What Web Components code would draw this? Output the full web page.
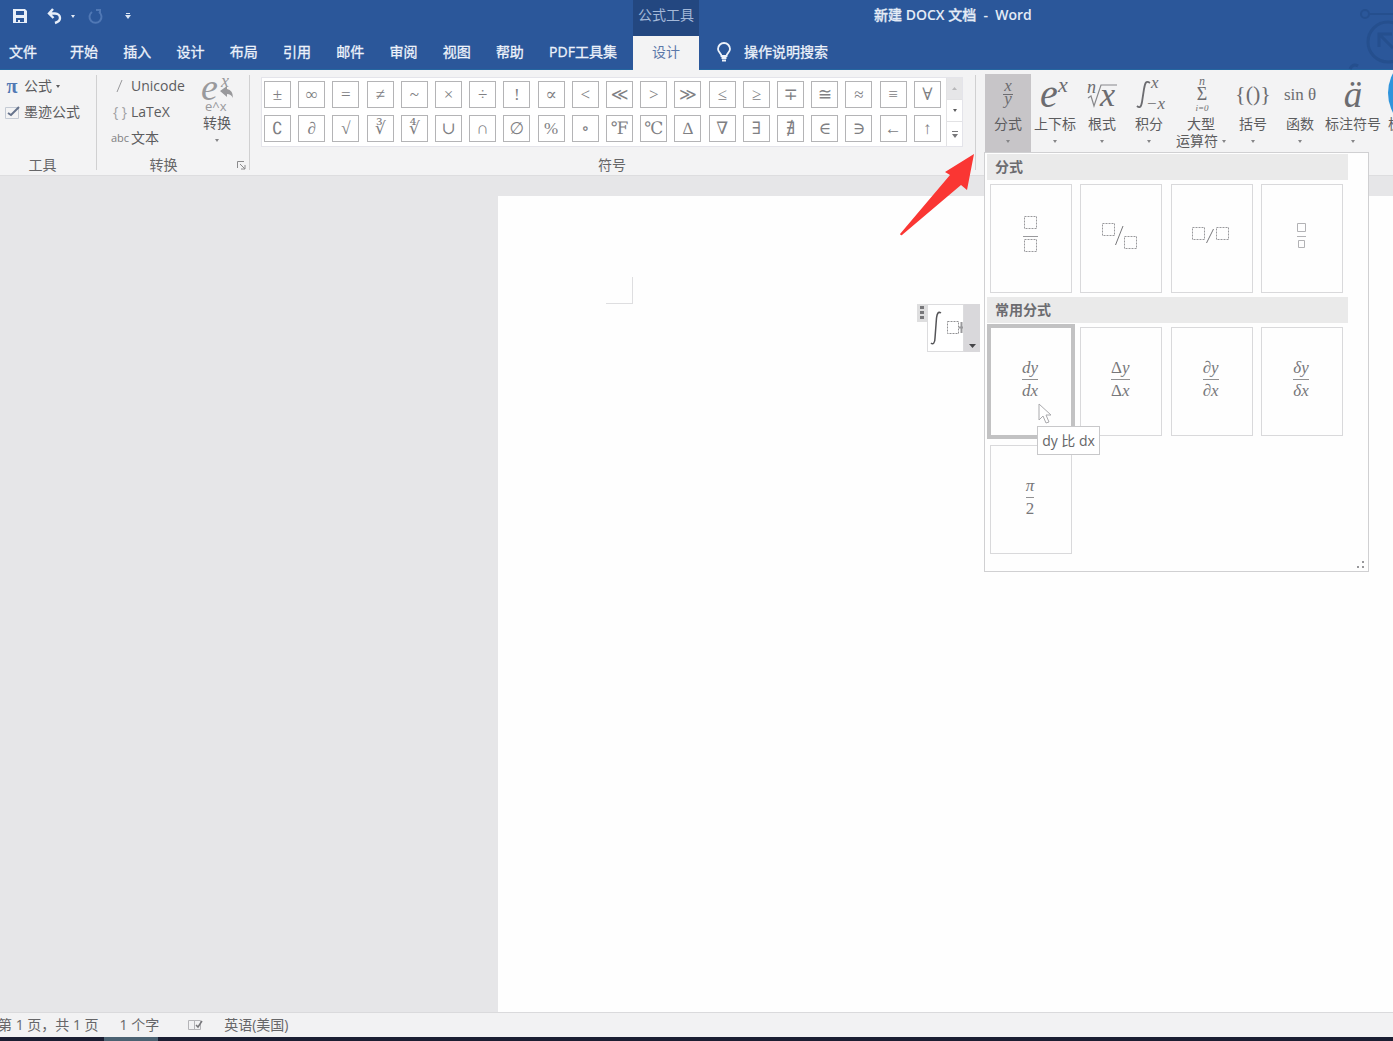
<!DOCTYPE html>
<html lang="zh-CN">
<head>
<meta charset="utf-8">
<title>新建 DOCX 文档 - Word</title>
<style>
html, body { margin: 0; height: 100%; overflow: hidden; }
body { font: 14px/20px "Open Sans", "Noto Sans CJK SC", sans-serif; color: #5c5c5e; }
</style>
</head>
<body>
<word-app></word-app>
<script>
const base = `*{box-sizing:border-box}
button{font:inherit;color:inherit;background:none;border:0;padding:0;margin:0;cursor:default}
a{color:inherit;text-decoration:none}svg{display:block;flex:none;overflow:visible}
svg text{font-family:"Liberation Serif","DejaVu Serif",serif}`;
function define(name, css, html) {
  customElements.define(name, class extends HTMLElement {
    constructor() {
      super();
      const root = this.attachShadow({ mode: "open" });
      root.innerHTML = `<style>${base}${css}</style>` + (typeof html === "function" ? html(this) : html);
    }
  });
}

define("caret-down", `:host{display:inline-block;width:4px;height:3px}`,
  `<svg width="4" height="3" viewBox="0 0 4 3"><path d="M0 0h4L2 3z" fill="currentColor"/></svg>`);

define("title-bar", `
:host{display:flex;height:36px;background:#2b579a;color:#e4ebf6;position:relative}
.quick{width:633px;display:flex;align-items:center;padding:0 13px 4px}
.quick button{display:flex;align-items:center}
.undo{margin-left:20px}.more{margin-left:9px}.redo{margin-left:13px}.custom{margin-left:22px}
.context{width:66px;background:#234780;color:#a3b8d8;text-align:center;line-height:30px}
h1{font:500 14px/30px "Open Sans","Noto Sans CJK SC",sans-serif;margin:0 0 0 175px;white-space:pre;-webkit-text-stroke:.3px}
.latin{font-weight:600;-webkit-text-stroke:0}
.art{position:absolute;right:0;top:0}`,
`<div class="quick">
<button aria-label="保存"><svg width="14" height="14" viewBox="0 0 14 14"><path fill="#e8eff9" fill-rule="evenodd" d="M0 0h12l2 2v12H0zM3 2v4h8V2zM3 9v4h2v-2h2v2h4V9z"/></svg></button>
<button class="undo" aria-label="撤消"><svg width="15" height="15" viewBox="0 0 15 15" fill="none" stroke="#e8eff9" stroke-width="2.400"><path d="M6 0L2 4.500l4.500 4.500M2 4.500h6c3 0 5 2 5 4.500s-2 4-5 5"/></svg></button>
<button class="more" aria-label="撤消列表"><caret-down></caret-down></button>
<button class="redo" aria-label="恢复"><svg width="15" height="15" viewBox="0 0 15 15" fill="none" stroke="#5078b5" stroke-width="2"><path d="M4 3a6 6 0 1 0 7 0M8 1h4v4"/></svg></button>
<button class="custom" aria-label="自定义快速访问工具栏"><svg width="6" height="6" viewBox="0 0 6 6" fill="#dce6f4"><path d="M1 0h4v1H1zM0 2h6L3 6z"/></svg></button>
</div>
<div class="context">公式工具</div>
<h1>新建 <span class="latin">DOCX</span> 文档  <span class="latin">-  Word</span></h1>
<svg class="art" width="43" height="70" viewBox="0 0 43 70" fill="none" stroke="#254f8e" stroke-width="3"><circle cx="15" cy="14" r="4" stroke-width="2"/><path d="M19 14h24" stroke-width="2"/><circle cx="38" cy="42" r="20"/><path d="M29 47V34h13M29 34l14 14M0 69q3-6 8-3"/></svg>`);

define("ribbon-tab", `
:host{display:block}
a{display:block;line-height:32px;white-space:nowrap;-webkit-text-stroke:.3px}
:host([selected]) a{width:66px;height:34px;text-align:center;background:#f3f3f4;color:#5b78a9;-webkit-text-stroke:0}`,
`<a href="#"><slot></slot></a>`);

define("ribbon-tabs", `
:host{display:flex;height:34px;background:linear-gradient(#2b579a 33px,#2566a0 33px);color:#edf2fa;position:relative}
nav{display:flex;padding-left:9px;width:633px}
.rest{display:flex;flex:1;justify-content:space-between;margin:0 16px 0 33px}
.tell{display:flex;gap:13px;margin-left:18px;align-items:center;height:32px;-webkit-text-stroke:.3px}`,
`<nav><ribbon-tab>文件</ribbon-tab><div class="rest">
${["开始","插入","设计","布局","引用","邮件","审阅","视图","帮助","PDF工具集"].map(t => `<ribbon-tab>${t}</ribbon-tab>`).join("")}
</div></nav><ribbon-tab selected>设计</ribbon-tab>
<button class="tell"><svg width="14" height="19" viewBox="0 0 14 19" fill="none" stroke="#edf2fa" stroke-width="1.800"><path d="M4.500 13C4.500 10 1 9.500 1 6a6 6 0 0 1 12 0c0 3.500-3.500 4-3.500 7z"/><path d="M4.500 15h5M5 17.500h4" stroke-width="2"/></svg><span>操作说明搜索</span></button>`);

define("ribbon-group", `
:host{display:flex;flex-direction:column;height:105px;flex:none;position:relative;border:0}
:host::after{content:"";position:absolute;right:0;top:5px;bottom:5px;width:1px;background:#d0d0d1}
.body{flex:1;display:flex;padding-top:3px}
footer{height:20px;line-height:20px;text-align:center;padding-right:var(--label-inset,0px);color:#666668}
.launch{position:absolute;right:4px;bottom:5px}`,
el => `<div class="body"><slot></slot></div><footer>${el.getAttribute("label")}</footer>` +
(el.hasAttribute("launcher") ? `<button class="launch" aria-label="转换选项"><svg width="9" height="9" viewBox="0 0 9 9" fill="none" stroke="#8a8a8c"><path d="M.5 7V.5H7M3 3l5 5M8 4v4H4"/></svg></button>` : ""));

define("small-command", `
:host{display:block}
button{display:flex;align-items:center;height:26px;white-space:nowrap}
.icon{display:flex;justify-content:center;flex:none;width:var(--icon,24px);color:#a0a0a2}
caret-down{margin-left:4px}`,
el => `<button><span class="icon"><slot name="icon"></slot></span><slot></slot>${el.hasAttribute("menu") ? "<caret-down></caret-down>" : ""}</button>`);

define("large-command", `
:host{display:block;flex:none}
button{display:flex;flex-direction:column;align-items:center;width:100%;height:78px;white-space:nowrap}
:host([open]) button{background:#c7c5c8}
.icon{height:41px;display:flex;align-items:center;justify-content:center}
.label{line-height:18px;text-align:center}
caret-down{margin-top:7px;color:#858587}
.two{display:flex;align-items:center;gap:4px;line-height:16px}.two caret-down{margin:0}`,
el => `<button><span class="icon"><slot></slot></span><span class="label">${el.getAttribute("label")}</span>` +
(el.getAttribute("second") ? `<span class="two">${el.getAttribute("second")}<caret-down></caret-down></span>` : `<caret-down></caret-down>`) + `</button>`);

define("symbol-gallery", `
:host{display:flex;width:702px;height:70px;margin:4px 0 0 11px;background:#fff;border:1px solid #e4e4ea}
.grid{flex:1;display:grid;grid-template-columns:repeat(20,27px);grid-auto-rows:27px;row-gap:7px;justify-content:space-between;padding:3px 5px 0 2px}
.grid button{border:1px solid #b4b4b6;font:17px/25px "Liberation Serif","DejaVu Serif","DejaVu Sans",serif;color:#808083;overflow:hidden;text-align:center}
.scroll{width:16px;display:grid;grid-template-rows:22px 22px 1fr;border-left:1px solid #e2e2e4}
.scroll button{display:flex;align-items:center;justify-content:center;border-bottom:1px solid #e2e2e4}
.scroll button:first-child{background:#e6e6e8;color:#b8b8ba}.scroll button:last-child{border:0}`,
`<div class="grid">${[..."±∞=≠~×÷!∝<≪>≫≤≥∓≅≈≡∀∁∂√∛∜∪∩∅%∘℉℃∆∇∃∄∈∋←↑"].map(s => `<button>${s.replace("<","&lt;")}</button>`).join("")}</div>
<div class="scroll"><button aria-label="上一行"><svg width="5" height="3"><path d="M0 3h5L2.500 0z" fill="currentColor"/></svg></button><button aria-label="下一行"><caret-down></caret-down></button><button aria-label="其他"><svg width="6" height="7" fill="#77777a"><path d="M0 0h6v1H0zM0 3h6L3 7z"/></svg></button></div>`);

define("math-fraction", `
:host{display:inline-flex;flex-direction:column;align-items:center;font:italic 17px/18px "Liberation Serif","DejaVu Serif",serif;color:#77777a}
:host([upright]){font-style:normal}
.top{padding:0 0 2px;border-bottom:1px solid #909092}.bottom{padding-top:2px}`,
`<span class="top"><slot name="top"></slot></span><span class="bottom"><slot name="bottom"></slot></span>`);

define("gallery-tile", `
:host{display:block;position:relative}
button{width:82px;height:109px;display:flex;align-items:center;justify-content:center;border:1px solid #d9d9db;background:#fefefe;padding:0 2px 5px 0}
:host([active]) button{outline:4px solid #c2c2c3;outline-offset:-1px}
.tip{position:absolute;left:47px;top:99px;z-index:2}`,
`<button><slot></slot></button><div class="tip"><slot name="tip"></slot></div>`);

define("screen-tip", `
:host{display:block;width:63px;height:29px;background:#fff;border:1px solid #c8c8ca;text-align:center;line-height:27px;white-space:nowrap;color:#666668;position:relative}
svg{position:absolute;left:0;top:-24px}`,
`<slot></slot><svg width="14" height="21" viewBox="0 0 14 21"><path d="M1 1v16l4-4 3 7 3-1-3-7h5z" fill="#fff" stroke="#aaaaad"/></svg>`);

define("fraction-menu", `
:host{display:block;width:385px;height:420px;background:#fefefe;border:1px solid #d0d0d2;padding:1px 20px 0 2px}
h2{margin:0;height:26px;background:#eaeaea;font:bold 14px/26px "Open Sans","Noto Sans CJK SC",sans-serif;color:#6c6c70;padding-left:8px}
.tiles{display:grid;grid-template-columns:repeat(4,82px);justify-content:space-between;row-gap:9px;padding:4px 5px 4px 3px}
.grip{position:absolute;right:4px;bottom:3px}`,
`<h2>分式</h2><div class="tiles">
<gallery-tile><svg width="16" height="40" fill="none" stroke="#99999c"><path d="M2.500.5h12v12h-12zM2.500 23.500h12v12h-12z" stroke-dasharray="2 1"/><path d="M1 20.500h15"/></svg></gallery-tile>
<gallery-tile><svg width="36" height="30" fill="none" stroke="#99999c"><path d="M.5 2.500h12v12H.5zM22.500 15.500h12v12h-12z" stroke-dasharray="2 1"/><path d="M13.500 24L21 5" stroke="#77777a"/></svg></gallery-tile>
<gallery-tile><svg width="38" height="18" fill="none" stroke="#99999c"><path d="M.5.5h12v12H.5zM24.500.5h12v12h-12z" stroke-dasharray="2 1"/><path d="M14.500 16l7-14" stroke="#77777a"/></svg></gallery-tile>
<gallery-tile><svg width="12" height="26" fill="none" stroke="#b2b2b5"><path d="M2.500.5h8v8h-8zM3.500 17.500h6v7h-6zM2 13.500h9"/></svg></gallery-tile>
</div><h2>常用分式</h2><div class="tiles">
<gallery-tile active><math-fraction><span slot="top">dy</span><span slot="bottom">dx</span></math-fraction><screen-tip slot="tip">dy 比 dx</screen-tip></gallery-tile>
<gallery-tile><math-fraction><span slot="top"><span style="font-style:normal">Δ</span>y</span><span slot="bottom"><span style="font-style:normal">Δ</span>x</span></math-fraction></gallery-tile>
<gallery-tile><math-fraction><span slot="top">∂y</span><span slot="bottom">∂x</span></math-fraction></gallery-tile>
<gallery-tile><math-fraction><span slot="top">δy</span><span slot="bottom">δx</span></math-fraction></gallery-tile>
<gallery-tile><math-fraction upright><i slot="top">π</i><span slot="bottom">2</span></math-fraction></gallery-tile>
</div><svg class="grip" width="7" height="7" fill="#98989b"><path d="M5 0h2v2H5zM5 5h2v2H5zM0 5h2v2H0z"/></svg>`);

define("structure-group", `
:host{display:block;flex:1;min-width:0;position:relative;padding:4px 0 0 9px}
.row{display:flex;overflow:hidden}
fraction-menu{position:absolute;left:8px;top:82px;z-index:5}
.w46{width:46px}.w48{width:48px}.w56{width:56px}.w60{width:60px}.w80{width:80px}
svg{fill:#6c6c70}`,
`<div class="row">
<large-command open class="w46" label="分式"><svg width="24" height="34"><g font-style="italic" font-size="17" text-anchor="middle"><text x="12" y="13">x</text><text x="12" y="26">y</text></g><path d="M7 16h10v1H7z"/></svg></large-command>
<large-command class="w48" label="上下标"><svg width="34" height="38"><g font-style="italic"><text x="2" y="31" font-size="40">e</text><text x="20" y="16" font-size="22">x</text></g></svg></large-command>
<large-command class="w46" label="根式"><svg width="34" height="36"><g font-style="italic"><text x="2" y="16" font-size="18">n</text><text x="15" y="29" font-size="34">x</text></g><path d="M3 21l3-2 3 10 7-21h16" fill="none" stroke="#88888b" stroke-width="1.200"/></svg></large-command>
<large-command class="w48" label="积分"><svg width="32" height="36"><path d="M17 6c-4-3-5 0-6 6L9 25c-1 6-3 6-5 4" fill="none" stroke="#6c6c70" stroke-width="1.800"/><g font-style="italic" font-size="17"><text x="18" y="11">x</text><text x="13" y="32">−x</text></g></svg></large-command>
<large-command class="w56" label="大型" second="运算符"><svg width="24" height="38"><g text-anchor="middle"><text x="13" y="9" font-size="12" font-style="italic">n</text><text x="13" y="24" font-size="18">Σ</text><text x="13" y="35" font-size="9" font-style="italic">i=0</text></g></svg></large-command>
<large-command class="w48" label="括号"><svg width="36" height="34"><text x="18" y="23" font-size="22" text-anchor="middle">{()}</text></svg></large-command>
<large-command class="w46" label="函数"><svg width="36" height="34"><text x="18" y="22" font-size="17" text-anchor="middle">sin θ</text></svg></large-command>
<large-command class="w60" label="标注符号"><svg width="28" height="38"><text x="14" y="31" font-size="37" font-style="italic" text-anchor="middle">ä</text></svg></large-command>
<large-command class="w80" label="极限和对数"></large-command>
</div><fraction-menu></fraction-menu>`);

define("tool-ribbon", `
:host{display:flex;height:106px;background:#f3f3f4;border-bottom:1px solid #dddddf;position:relative;z-index:2}
.tools{width:97px;--label-inset:12px}.convert{width:153px;--label-inset:20px}.symbols{width:726px;--label-inset:2px}
.col{display:flex;flex-direction:column}
.convert .col{padding-left:12px;width:93px;--icon:22px}
.convert large-command{width:54px}
.abc{font-size:11px;color:#808083}.pi{font:bold 20px/20px "Liberation Serif",serif;color:#5279b4}
.bubble{position:absolute;right:0;top:0;overflow:hidden}`,
`<ribbon-group class="tools" label="工具"><div class="col">
<small-command menu><span slot="icon" class="pi">π</span>公式</small-command>
<small-command><svg slot="icon" width="15" height="15" viewBox="0 0 15 15" fill="none"><path d="M.5 2.500h13v11H.5z" stroke="#c4cad4"/><path d="M3 8l3 2 8-8" stroke="#66738c" stroke-width="2"/></svg>墨迹公式</small-command></div></ribbon-group>
<ribbon-group class="convert" label="转换" launcher><div class="col">
<small-command><svg slot="icon" width="8" height="14"><path d="M1 13L6 1" stroke="#98989b"/></svg>Unicode</small-command>
<small-command><span slot="icon">{ }</span>LaTeX</small-command>
<small-command><span slot="icon" class="abc">abc</span>文本</small-command></div>
<large-command label="转换"><svg width="34" height="38" fill="#99999c"><g font-style="italic"><text x="1" y="25" font-size="38">e</text><text x="21" y="12" font-size="18">x</text></g><path d="M20 16l7-5v3q6 1 6 9-2-4-6-4v3z"/><text x="5" y="36" font-size="13" style="font-family:'Open Sans',sans-serif">e^x</text></svg></large-command></ribbon-group>
<ribbon-group class="symbols" label="符号"><symbol-gallery></symbol-gallery></ribbon-group>
<structure-group></structure-group>
<svg class="bubble" width="5" height="46" viewBox="0 0 5 46"><circle cx="41" cy="23" r="41" fill="#2f94dc"/></svg>`);

define("equation-box", `
:host{display:flex;align-items:flex-start;height:48px}
.handle{width:10px;height:18px;background:#dededf;display:flex;align-items:center;justify-content:center}
.math{width:37px;height:48px;border:1px solid #dcdcde;background:#fff}
.drop{width:16px;height:48px;background:#d9d8db;display:flex;align-items:flex-end;justify-content:center;padding-bottom:4px}`,
`<button class="handle" aria-label="移动公式"><svg width="4" height="14" fill="#77777a"><path d="M0 0h4v3H0zM0 5h4v3H0zM0 10h4v3H0z"/></svg></button>
<div class="math"><svg width="36" height="46" viewBox="0 0 36 46" fill="none"><path d="M13 8c-3-2-4 1-4.500 5L7 33c0 5-2 7-4 5" stroke="#555558" stroke-width="1.500"/><path d="M19.500 16.500h11v12h-11z" stroke="#909093" stroke-dasharray="2 1"/><path d="M33.500 17v11M31 22.500h4" stroke="#99999c" stroke-width="2"/></svg></div>
<button class="drop" aria-label="公式选项"><svg width="7" height="4"><path d="M0 0h7L3.500 4z" fill="#454548"/></svg></button>`);

define("document-area", `
:host{display:flex;flex:1;min-height:0;background:#e6e6e8;padding:20px 0 0 498px;position:relative}
main{flex:1;background:#fefefe;display:flex;flex-direction:column;padding:81px 0 0 108px}
.corner{width:27px;height:27px;border:solid #dedee0;border-width:0 1px 1px 0}
equation-box{margin-left:311px}
.arrow{position:absolute;left:899px;top:-24px;z-index:3}`,
`<main><div class="corner"></div><equation-box></equation-box></main>
<svg class="arrow" width="77" height="84" viewBox="0 0 77 84"><path d="M75 2L46 20l5 3L1 82q1 2 2 1L62 33l6 5z" fill="#fa3633"/></svg>`);

define("status-bar", `
:host{display:block;color:#666668}
.bar{display:flex;align-items:center;height:25px;background:#f2f2f3;border-top:1px solid #dadadc;white-space:nowrap}
.pages{margin-left:-2px}.count{margin-left:21px}.proof{margin-left:29px}.lang{margin-left:21px}
.edge{height:4px;background:#1b1e32;padding-left:104px}.edge i{display:block;width:54px;height:4px;background:#4b6272}`,
`<div class="bar"><span class="pages">第 1 页，共 1 页</span><span class="count">1 个字</span>
<button class="proof" aria-label="校对"><svg width="15" height="13" viewBox="0 0 15 13" fill="none" stroke="#b4b4b7"><path d="M6.500 1.500H.5v9h6zM6.500 1.500h6v9h-6z"/><path d="M8 6l2 2 4-6" stroke="#77777a" stroke-width="1.500"/></svg></button>
<button class="lang">英语(美国)</button></div><div class="edge"><i></i></div>`);

define("word-app", `:host{display:flex;flex-direction:column;height:100vh;overflow:hidden}title-bar{z-index:1}document-area{z-index:auto}`,
`<title-bar></title-bar><ribbon-tabs></ribbon-tabs><tool-ribbon></tool-ribbon><document-area></document-area><status-bar></status-bar>`);
</script>
</body>
</html>
